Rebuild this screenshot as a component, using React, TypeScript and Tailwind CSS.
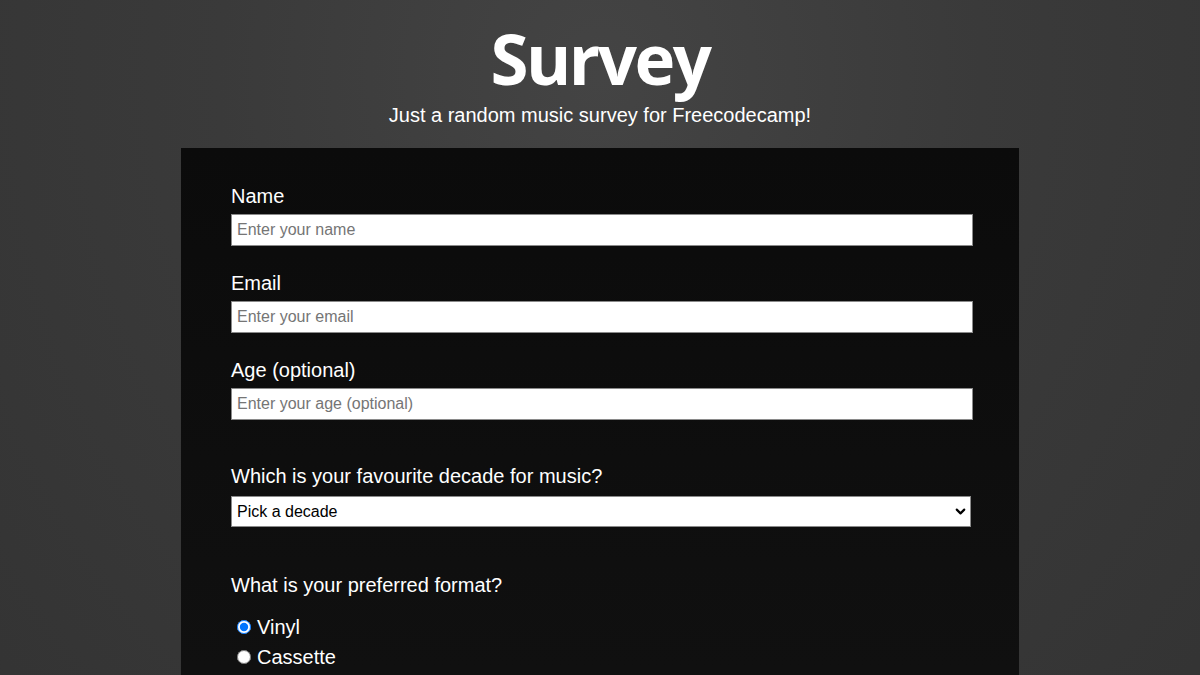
import { ChevronDown } from 'lucide-react'

const fieldLabel = 'block text-[20px] leading-[23px] text-white mb-[6px]'
const textInput =
  'block w-full h-[32px] bg-white border border-[#8a8a8a] px-[5px] text-[16px] text-black placeholder:text-[#757575] outline-none'

function TextField({ id, label, placeholder, type = 'text', last = false }: { id: string; label: string; placeholder: string; type?: string; last?: boolean }) {
  return (
    <div className={last ? 'mb-[45px]' : 'mb-[26px]'}>
      <label htmlFor={id} className={fieldLabel}>
        {label}
      </label>
      <input id={id} type={type} placeholder={placeholder} className={textInput} />
    </div>
  )
}

export default function App() {
  return (
    <div
      className="min-h-screen w-full bg-[radial-gradient(ellipse_at_50%_10%,#444444_0%,#3a3a3a_45%,#333333_100%)] text-white"
      style={{ fontFamily: '"Liberation Sans", Arial, sans-serif' }}
    >
      <header className="pt-[24px] text-center">
        <h1
          className="text-[69px] leading-[69px] font-bold tracking-[-2.5px] text-white"
          style={{ fontFamily: '"Open Sans", "Noto Sans", sans-serif' }}
        >
          Survey
        </h1>
        <p className="mt-[11px] text-[20px] leading-[23px] text-white">
          Just a random music survey for Freecodecamp!
        </p>
      </header>

      <form className="mx-auto mt-[21px] w-[838px] bg-[linear-gradient(180deg,#0b0b0b_0%,#111111_100%)] pl-[50px] pr-[46px] pt-[37px] pb-[40px]">
        <TextField id="name" label="Name" placeholder="Enter your name" />
        <TextField id="email" label="Email" type="email" placeholder="Enter your email" />
        <TextField id="age" label="Age (optional)" type="number" placeholder="Enter your age (optional)" last />

        <div className="mb-[47px]">
          <label htmlFor="decade" className="block text-[20px] leading-[23px] text-white mb-[8px]">
            Which is your favourite decade for music?
          </label>
          <div className="relative w-[740px]">
            <select
              id="decade"
              defaultValue=""
              className="block w-full h-[31px] appearance-none bg-white border border-[#8a8a8a] pl-[5px] pr-[30px] text-[16px] text-black outline-none"
            >
              <option value="" disabled>
                Pick a decade
              </option>
              <option value="60s">1960s</option>
              <option value="70s">1970s</option>
              <option value="80s">1980s</option>
              <option value="90s">1990s</option>
            </select>
            <ChevronDown
              className="pointer-events-none absolute right-[3px] top-[8px] w-[15px] h-[15px] text-black"
              strokeWidth={3.5}
            />
          </div>
        </div>

        <p className="text-[20px] leading-[23px] text-white mb-[15px]">What is your preferred format?</p>
        <div className="flex flex-col">
          {['Vinyl', 'Cassette', 'CD', 'Digital'].map((f, i) => (
            <label key={f} className="flex items-center h-[30px] text-[20px] text-white">
              <input
                type="radio"
                name="format"
                value={f}
                defaultChecked={i === 0}
                className="ml-[6px] mr-[6px] w-[14px] h-[14px]"
              />
              {f}
            </label>
          ))}
        </div>
      </form>
    </div>
  )
}
